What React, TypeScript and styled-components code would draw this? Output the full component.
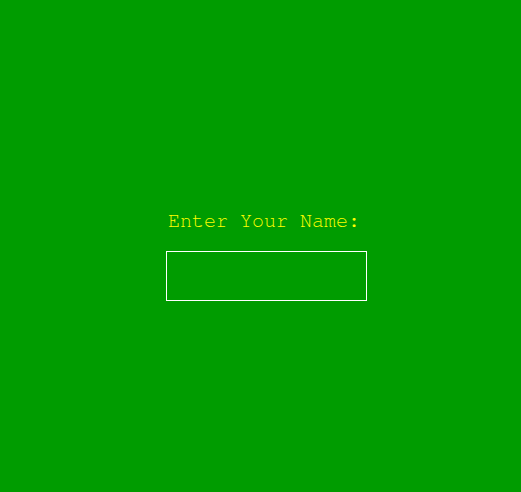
import React from "react";
import styled, { createGlobalStyle } from "styled-components";

const Global = createGlobalStyle`
  html, body { margin: 0; padding: 0; background: #009c00; }
  body { width: 521px; height: 492px; overflow: hidden; }
`;

const Page = styled.div`
  width: 521px;
  height: 492px;
  background: #009c00;
  box-sizing: border-box;
  padding: 209px 0 0 166px;
  display: flex;
  flex-direction: column;
  align-items: flex-start;
`;

const Label = styled.label`
  font-family: "TeX Gyre Cursor", "FreeMono", "Courier New", monospace;
  font-size: 20px;
  line-height: 23px;
  color: #ffff00;
  margin-left: 2px;
`;

const Input = styled.input`
  margin-top: 19px;
  width: 201px;
  height: 50px;
  box-sizing: border-box;
  background: transparent;
  border: 1px solid #ffffff;
  outline: none;
  padding: 0 6px;
  font-family: "TeX Gyre Cursor", monospace;
  font-size: 16px;
  color: #ffff00;
`;

export default function App() {
  return (
    <>
      <Global />
      <Page>
        <Label htmlFor="name">Enter Your Name:</Label>
        <Input id="name" type="text" />
      </Page>
    </>
  );
}
